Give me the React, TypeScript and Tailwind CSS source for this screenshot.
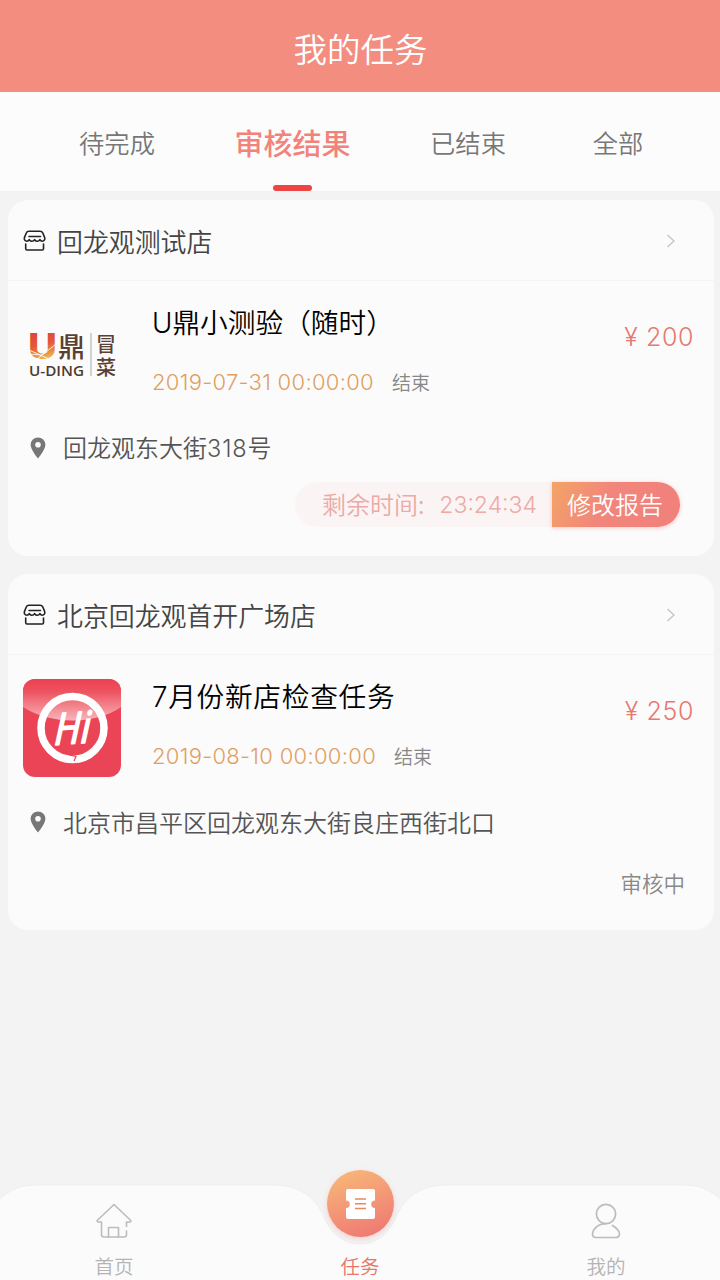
import type { FC, ReactNode } from 'react';

interface Task {
  id: number;
  store: string;
  title: ReactNode;
  titleClass: string;
  date: string;
  dateClass: string;
  price: string;
  address: ReactNode;
  logo: ReactNode;
  footer: ReactNode;
}

const StoreIcon: FC = () => (
  <svg width="24" height="22" viewBox="0 0 24 22" fill="none" stroke="#222" strokeWidth="1.6" strokeLinejoin="round" strokeLinecap="round">
    <path d="M6 1.200h11c1.400 0 2.200.5 2.700 1.600l2 4.800c.5 2-.6 3.600-2.400 3.600-1.400 0-1.900-.6-2.400-1.500-.6 1-1.400 1.600-2.600 1.600S12.300 10.700 11.600 9.700c-.6 1-1.400 1.600-2.600 1.600S7 10.700 6.300 9.700C5.800 10.600 5.200 11.200 3.800 11.200 2 11.200.9 9.600 1.400 7.600l2-4.800C3.800 1.700 4.700 1.200 6 1.200z" />
    <path d="M6 6.500h11.500M2.700 14v4.700c0 .8.500 1.300 1.300 1.300h15.200c.8 0 1.300-.5 1.300-1.300V14" />
  </svg>
);

const PinIcon: FC = () => (
  <svg width="16" height="22" viewBox="0 0 16 22">
    <path fillRule="evenodd" fill="#777" d="M8 .4a7.400 7.400 0 0 0-7.400 7.400C.6 13 8 21.500 8 21.500S15.400 13 15.400 7.800A7.400 7.400 0 0 0 8 .4zM8 5a2.800 2.800 0 1 1 0 5.600A2.800 2.800 0 0 1 8 5z" />
  </svg>
);

const ArrowIcon: FC = () => (
  <svg width="10" height="14" viewBox="0 0 10 14" fill="none" stroke="#c4c4c4" strokeWidth="1.3">
    <path d="M1.500 1l6.500 6-6.500 6" />
  </svg>
);

const UDingLogo: FC = () => (
  <svg width="98" height="98" viewBox="0 0 98 98" fontFamily="'Noto Sans CJK SC', sans-serif">
    <defs>
      <linearGradient id="uding" gradientUnits="userSpaceOnUse" x1="10" y1="28" x2="18" y2="55">
        <stop offset="0" stopColor="#df4438" />
        <stop offset="0.5" stopColor="#e55a38" />
        <stop offset="0.75" stopColor="#ea8636" />
        <stop offset="1" stopColor="#f0b850" />
      </linearGradient>
    </defs>
    <text x="5" y="54" fontSize="36" fontWeight="800" fill="url(#uding)" fontFamily="Inter, sans-serif" textLength="29" lengthAdjust="spacingAndGlyphs">U</text>
    <path d="M6 45l20 9M13 55l20-16M6 49l12 1 6-3" stroke="#fafafa" strokeWidth="0.9" fill="none" />
    <text x="35" y="52" fontSize="27" fontWeight="500" fill="#5a4032">鼎</text>
    <text x="6" y="71" fontSize="15" fontWeight="600" fill="#4d3b30" fontFamily="'Open Sans', sans-serif" textLength="55" lengthAdjust="spacingAndGlyphs">U-DING</text>
    <path d="M68 28v43" stroke="#aaa" strokeWidth="1" />
    <text x="73" y="46.500" fontSize="20" fontWeight="500" fill="#5a4032">冒</text>
    <text x="73" y="69.500" fontSize="20" fontWeight="500" fill="#5a4032">菜</text>
  </svg>
);

const HiLogo: FC = () => (
  <svg width="98" height="98" viewBox="0 0 98 98">
    <defs>
      <linearGradient id="gloss" x1="0" y1="0" x2="0" y2="1">
        <stop offset="0" stopColor="#ec4152" />
        <stop offset="0.3" stopColor="#ee5260" />
        <stop offset="1" stopColor="#f8b4b9" />
      </linearGradient>
      <clipPath id="tile">
        <rect width="98" height="98" rx="12" />
      </clipPath>
    </defs>
    <g clipPath="url(#tile)">
      <rect width="98" height="98" fill="#ea4456" />
      <path d="M0 0h98v28C72 46 28 46 0 28z" fill="url(#gloss)" />
    </g>
    <circle cx="49.500" cy="49" r="31.500" fill="none" stroke="#fff" strokeWidth="7.500" />
    <path d="M46 76l7 1.500-2 4.500" fill="none" stroke="#ea4456" strokeWidth="1.200" />
    <g transform="translate(31 66) skewX(-6) rotate(-4)">
      <text x="0" y="0" fontSize="44" fontWeight="500" fontStyle="italic" fill="#fff" stroke="#fff" strokeWidth="1.600" strokeLinejoin="round" fontFamily="'Open Sans', sans-serif" textLength="36" lengthAdjust="spacingAndGlyphs">Hi</text>
    </g>
  </svg>
);

const tasks: Task[] = [
  {
    id: 1,
    store: '回龙观测试店',
    title: <><span className="font-[Inter]">U</span>鼎小测验（随时）</>,
    titleClass: 'text-[27.7px]',
    date: '2019-07-31 00:00:00',
    dateClass: 'w-[223px]',
    price: '200',
    address: <>回龙观东大街<span className="font-[Inter] text-[23.5px] tracking-[0.9px]">318</span>号</>,
    logo: <UDingLogo />,
    footer: (
      <div className="mr-[34px] mt-[11px] flex h-[45px] text-[24px] leading-[44px]">
        <div className="flex w-[257px] justify-between rounded-l-full bg-[#fbf4f4] pl-[27px] pr-[15px] text-[#edaaa7]">
          <span>剩余时间:</span>
          <span className="pt-px font-[Inter] text-[23px]">23:24:34</span>
        </div>
        <div className="w-[128px] rounded-r-full bg-linear-[115deg,#f3a466_0%,#f1867b_42%,#f1807b_100%] pl-[15px] text-white shadow-[0_1px_4px_#f1a09a90]">
          修改报告
        </div>
      </div>
    ),
  },
  {
    id: 2,
    store: '北京回龙观首开广场店',
    title: <><span className="font-[Inter]">7</span>月份新店检查任务</>,
    titleClass: 'text-[27.7px] tracking-[0.7px]',
    date: '2019-08-10 00:00:00',
    dateClass: 'w-[225px]',
    price: '250',
    address: '北京市昌平区回龙观东大街良庄西街北口',
    logo: <HiLogo />,
    footer: <div className="mr-[29px] mt-[22px] text-[21.5px] leading-[32px] text-[#888]">审核中</div>,
  },
];

const TaskCard: FC<{ task: Task }> = ({ task }) => (
  <div className="h-[356px] rounded-[20px] bg-[#fbfbfb]">
    <div className="flex h-[81px] items-center border-b border-[#f4f4f4] pl-[15px] pr-[38px] pt-[2px]">
      <StoreIcon />
      <div className="ml-[10px] flex-1 text-[25.9px] text-[#444]">{task.store}</div>
      <ArrowIcon />
    </div>
    <div className="flex h-[147px] pl-[15px] pr-[20px]">
      <div className="mt-[24px] w-[98px]">{task.logo}</div>
      <div className="ml-[31px] flex-1 whitespace-nowrap">
        <div className={`mt-[20px] h-[40px] leading-[40px] text-black ${task.titleClass}`}>{task.title}</div>
        <div className="mt-[24px] flex items-center leading-[34px]">
          <span className={`font-[Inter] text-[22px] tracking-[0.3px] text-[#e09f62] ${task.dateClass}`}>{task.date}</span>
          <span className="ml-[17px] text-[19px] text-[#888]">结束</span>
        </div>
      </div>
      <div className="mt-[37px] font-[Inter] text-[25px] leading-[38px] tracking-[0.6px] text-[#e77970]">¥ {task.price}</div>
    </div>
    <div className="flex h-[40px] items-center pl-[22px] text-[#555]">
      <PinIcon />
      <span className="ml-[17px] text-[24px] leading-[40px]">{task.address}</span>
    </div>
    <div className="flex justify-end pt-[3px]">{task.footer}</div>
  </div>
);

const tabs = [
  { label: '待完成', className: 'ml-[79px] w-[76px]', active: false },
  { label: '审核结果', className: 'ml-[79px] w-[117px]', active: true },
  { label: '已结束', className: 'ml-[79px] w-[76px]', active: false },
  { label: '全部', className: 'ml-[86px] w-[52px]', active: false },
];

const BottomNav: FC = () => (
  <div className="relative h-[115px] text-[19.5px] text-[#b4b4b4]">
    <svg className="absolute left-0 top-0" width="720" height="115" viewBox="0 0 720 115">
      <path d="M-2 36C12 22 24 20 38 20H272C301 20 314 33 322 48C330 67 342 79 360 79S390 67 398 48C406 33 419 20 448 20H682C696 20 708 22 722 36V117H-2z" fill="#fbfbfb" stroke="#efefef" strokeWidth="1" />
    </svg>
    <div className="relative grid h-full grid-cols-[228px_264px_228px]">
      <div className="flex flex-col items-center pt-[38px]">
        <svg width="36" height="36" viewBox="0 0 36 36" fill="none" stroke="#bcbcbc" strokeWidth="1.6" strokeLinejoin="round" strokeLinecap="round">
          <path d="M30.500 28v3.500c0 1.500-.8 2.500-2.300 2.500H8c-1.500 0-2.500-1-2.500-2.500V19H2.500c-1.500 0-1.800-1-.8-2L18 1.500 34.300 17c1 1 .7 2-.8 2h-3v4.500" />
          <path d="M12.500 34V24.500h10V34" />
        </svg>
        <span className="mt-[11px] leading-[32px]">首页</span>
      </div>
      <div className="flex flex-col items-center pt-[5px]">
        <div className="flex size-[67px] items-center justify-center rounded-full bg-linear-[160deg,#f8b878_5%,#ef7a74_90%] shadow-[0_2px_5px_#f4b0a580]">
          <svg width="29" height="30" viewBox="0 0 29 30">
            <path d="M2 0H27Q29 0 29 2V11.500A3.700 3.700 0 0 0 29 19V28Q29 30 27 30H2Q0 30 0 28V19A3.700 3.700 0 0 0 0 11.500V2Q0 0 2 0z" fill="#fff" />
            <path d="M9 10H20M9 14.700H20M9 19.400H20" stroke="#e88862" strokeWidth="1.500" />
          </svg>
        </div>
        <span className="mt-[13px] leading-[32px] text-[#e6766a]">任务</span>
      </div>
      <div className="flex flex-col items-center pt-[38px]">
        <svg width="30" height="36" viewBox="0 0 30 36" fill="none" stroke="#bcbcbc" strokeWidth="1.700" strokeLinecap="round">
          <circle cx="15" cy="11" r="9.600" />
          <path d="M21.500 22.500C26 25 29 29 28.500 31.500 28 33.500 27 34.500 25 34.500H5C3 34.500 1.500 33 1.500 31 2 26 7 20.600 15 20.600" />
        </svg>
        <span className="mt-[11px] leading-[32px]">我的</span>
      </div>
    </div>
  </div>
);

const App: FC = () => {
  return (
    <div className="flex h-[1280px] w-[720px] flex-col overflow-hidden bg-[#f3f3f4] font-['Noto_Sans_CJK_SC',sans-serif] font-[350]">
      <header className="flex h-[92px] items-center justify-center bg-[#f38d7f] pl-px pt-[5px] text-[33.5px] text-white">
        我的任务
      </header>
      <nav className="flex h-[99px] bg-[#fcfcfc] whitespace-nowrap">
        {tabs.map((tab) => (
          <div key={tab.label} className={`flex flex-col items-center ${tab.className}`}>
            <span className={`mt-[26px] leading-[48px] ${tab.active ? 'text-[29px] font-medium text-[#f2837b]' : 'text-[25.3px] text-[#777]'}`}>
              {tab.label}
            </span>
            {tab.active && <div className="mt-[19px] h-[6px] w-[39px] rounded-full bg-[#ef4444]" />}
          </div>
        ))}
      </nav>
      <main className="flex flex-1 flex-col gap-[18px] pl-[8px] pr-[6px] pt-[9px]">
        {tasks.map((task) => (
          <TaskCard key={task.id} task={task} />
        ))}
      </main>
      <BottomNav />
    </div>
  );
};

export default App;
